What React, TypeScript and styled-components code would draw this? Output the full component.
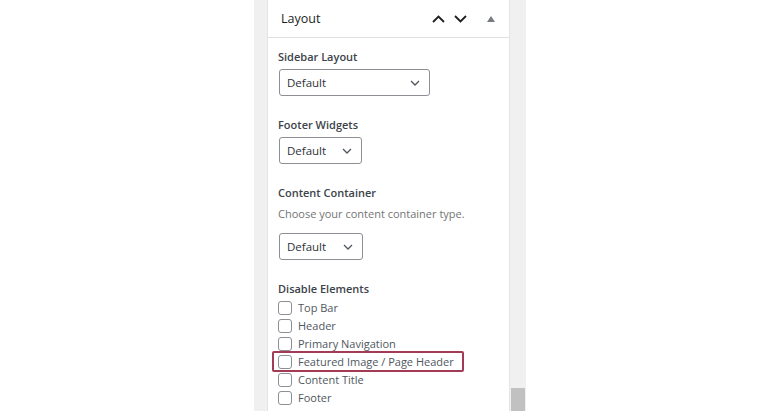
import styled, { createGlobalStyle } from 'styled-components';

const GlobalStyle = createGlobalStyle`
  html, body {
    margin: 0;
    padding: 0;
    background: #ffffff;
    font-family: 'Open Sans', 'Noto Sans', sans-serif;
    overflow: hidden;
  }
`;

const disableItems = [
  'Top Bar',
  'Header',
  'Primary Navigation',
  'Featured Image / Page Header',
  'Content Title',
  'Footer',
];

const ChevronDown = ({ size = 10 }: { size?: number }) => (
  <svg width={size} height={size * 0.6} viewBox="0 0 10 6" fill="none">
    <path d="M1 1 L5 5 L9 1" stroke="#50575e" strokeWidth="1.3" />
  </svg>
);

const HeaderUp = () => (
  <svg width="13" height="8" viewBox="0 0 13 8" fill="none">
    <path d="M1 7 L6.5 1.5 L12 7" stroke="#1e1e1e" strokeWidth="1.8" />
  </svg>
);

const HeaderDown = () => (
  <svg width="13" height="8" viewBox="0 0 13 8" fill="none">
    <path d="M1 1 L6.5 6.5 L12 1" stroke="#1e1e1e" strokeWidth="1.8" />
  </svg>
);

const Toggle = () => (
  <svg width="8" height="6" viewBox="0 0 8 6">
    <path d="M0 6 L4 0 L8 6 Z" fill="#787c82" />
  </svg>
);

const App = () => {
  return (
    <Page>
      <GlobalStyle />
      <Frame>
        <Gutter />
        <Panel>
          <PanelHeader>
            <PanelTitle>Layout</PanelTitle>
            <HeaderActions>
              <IconButton><HeaderUp /></IconButton>
              <IconButton><HeaderDown /></IconButton>
              <ToggleButton><Toggle /></ToggleButton>
            </HeaderActions>
          </PanelHeader>
          <PanelBody>
            <Field>
              <Label>Sidebar Layout</Label>
              <Select $width={151}>
                <span>Default</span>
                <ChevronDown />
              </Select>
            </Field>
            <Field>
              <Label>Footer Widgets</Label>
              <Select $width={83}>
                <span>Default</span>
                <ChevronDown />
              </Select>
            </Field>
            <Field>
              <Label>Content Container</Label>
              <Description>Choose your content container type.</Description>
              <Select $width={84}>
                <span>Default</span>
                <ChevronDown />
              </Select>
            </Field>
            <Field>
              <Label>Disable Elements</Label>
              <CheckList>
                {disableItems.map(item => (
                  <CheckRow key={item} $highlight={item === 'Featured Image / Page Header'}>
                    <Checkbox />
                    <CheckLabel>{item}</CheckLabel>
                  </CheckRow>
                ))}
              </CheckList>
            </Field>
          </PanelBody>
        </Panel>
        <ScrollTrack>
          <ScrollThumb />
        </ScrollTrack>
      </Frame>
    </Page>
  );
};

const Page = styled.div`
  width: 768px;
  height: 411px;
  display: flex;
  padding-left: 254px;
  box-sizing: border-box;
`;

const Frame = styled.div`
  display: flex;
  height: 411px;
  background: #f0f0f1;
`;

const Gutter = styled.div`
  width: 13px;
  border-right: 1px solid #e2e4e7;
`;

const Panel = styled.div`
  width: 241px;
  background: #ffffff;
  border-right: 1px solid #e2e4e7;
  display: flex;
  flex-direction: column;
`;

const PanelHeader = styled.div`
  height: 37px;
  border-bottom: 1px solid #e0e0e0;
  display: flex;
  align-items: center;
  padding: 0 14px 0 13px;
`;

const PanelTitle = styled.h2`
  flex: 1;
  margin: 0;
  font-size: 12.5px;
  font-weight: 400;
  color: #1e1e1e;
`;

const HeaderActions = styled.div`
  display: flex;
  align-items: center;
  gap: 9px;
`;

const IconButton = styled.span`
  display: flex;
  align-items: center;
  justify-content: center;
  width: 13px;
  height: 16px;
`;

const ToggleButton = styled.span`
  display: flex;
  align-items: center;
  margin-left: 11px;
  height: 16px;
`;

const PanelBody = styled.div`
  padding: 10px 10px 0 10px;
  display: flex;
  flex-direction: column;
  gap: 20px;
`;

const Field = styled.div`
  display: flex;
  flex-direction: column;
  align-items: flex-start;
`;

const Label = styled.div`
  font-size: 11px;
  font-weight: 600;
  line-height: 18px;
  color: #3c434a;
  margin-bottom: 3px;
`;

const Description = styled.div`
  font-size: 11px;
  line-height: 18px;
  color: #757575;
  margin-bottom: 10px;
`;

const Select = styled.div<{ $width: number }>`
  width: ${props => props.$width}px;
  height: 27px;
  box-sizing: border-box;
  margin-left: 1px;
  border: 1px solid #8c8f94;
  border-radius: 3px;
  display: flex;
  align-items: center;
  justify-content: space-between;
  padding: 0 9px 0 7px;
  font-size: 11.5px;
  color: #2c3338;
`;

const CheckList = styled.div`
  display: flex;
  flex-direction: column;
  margin-top: -2px;
`;

const CheckRow = styled.label<{ $highlight?: boolean }>`
  position: relative;
  display: flex;
  align-items: center;
  gap: 6px;
  height: 18px;

  &::after {
    content: '';
    display: ${props => (props.$highlight ? 'block' : 'none')};
    position: absolute;
    left: -6px;
    top: -2px;
    width: 192px;
    height: 21px;
    box-sizing: border-box;
    border: 2px solid #a33a56;
    border-radius: 2px;
  }
`;

const Checkbox = styled.span`
  width: 14px;
  height: 14px;
  box-sizing: border-box;
  border: 1px solid #8c8f94;
  border-radius: 3px;
  background: #fff;
`;

const CheckLabel = styled.span`
  font-size: 11px;
  color: #50575e;
  line-height: 18px;
`;

const ScrollTrack = styled.div`
  width: 14px;
  display: flex;
  flex-direction: column;
  justify-content: flex-end;
  padding: 0 1px 0 1px;
`;

const ScrollThumb = styled.div`
  height: 23px;
  background: #c1c1c1;
`;

export default App;
